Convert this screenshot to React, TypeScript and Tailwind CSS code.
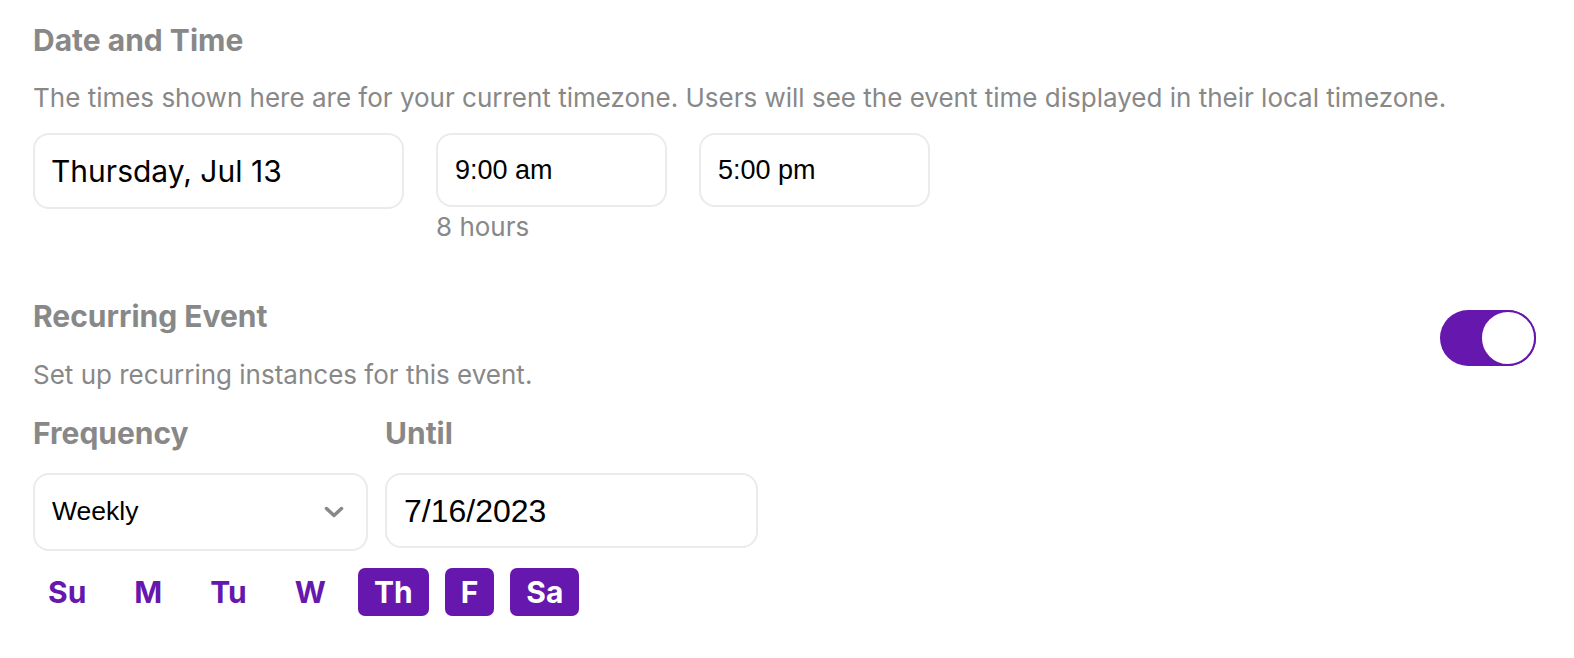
import React from 'react'

const inter = { fontFamily: 'Inter, "Noto Sans", sans-serif' }
const arial = { fontFamily: '"Liberation Sans", Arial, sans-serif' }

const days = [
  { label: 'Su', on: false },
  { label: 'M', on: false },
  { label: 'Tu', on: false },
  { label: 'W', on: false },
  { label: 'Th', on: true },
  { label: 'F', on: true },
  { label: 'Sa', on: true },
]

const App: React.FC = () => {
  return (
    <div className="min-h-screen bg-white pl-[33px] pr-[38px] pt-[24px]" style={inter}>
      {/* Date and time */}
      <h2 className="text-[30px] leading-[32px] font-bold text-[#888888]">Date and Time</h2>
      <p className="mt-[26px] text-[26px] leading-[32px] text-[#888888]">
        The times shown here are for your current timezone. Users will see the event time displayed in their local timezone.
      </p>

      <div className="mt-[19px] flex items-start gap-[32px]">
        <div className="flex h-[76px] w-[371px] items-center rounded-[16px] border-2 border-[#ebebeb] px-[16px] text-[30px] text-black">
          Thursday, Jul 13
        </div>
        <div className="flex flex-col">
          <div
            className="flex h-[74px] w-[231px] items-center rounded-[16px] border-2 border-[#ebebeb] px-[17px] text-[27px] text-black"
            style={arial}
          >
            9:00 am
          </div>
          <span className="mt-[4px] text-[26px] leading-[32px] text-[#888888]">8 hours</span>
        </div>
        <div
          className="flex h-[74px] w-[231px] items-center rounded-[16px] border-2 border-[#ebebeb] px-[17px] text-[27px] text-black"
          style={arial}
        >
          5:00 pm
        </div>
      </div>

      {/* Recurring */}
      <div className="mt-[57px] flex items-start justify-between">
        <div>
          <h2 className="text-[30px] leading-[32px] font-bold text-[#888888]">Recurring Event</h2>
          <p className="mt-[27px] text-[26px] leading-[32px] text-[#888888]">
            Set up recurring instances for this event.
          </p>
        </div>
        <div className="mt-[10px] flex h-[56px] w-[96px] justify-end rounded-full bg-[#6617ad]">
          <div className="h-[56px] w-[56px] rounded-full border-2 border-[#6617ad] bg-white" />
        </div>
      </div>

      <div className="mt-[25px] flex items-start gap-[17px]">
        <div className="flex flex-col">
          <span className="text-[30px] leading-[34px] font-bold text-[#888888]">Frequency</span>
          <div
            className="mt-[23px] flex h-[78px] w-[335px] items-center justify-between rounded-[16px] border-2 border-[#ebebeb] pl-[17px] pr-[22px] text-[26.5px] text-black"
            style={arial}
          >
            Weekly
            <svg width="20" height="12" viewBox="0 0 20 12" fill="none">
              <path d="M2.5 2.5 L10 9.5 L17.5 2.5" stroke="#888888" strokeWidth="3.5" strokeLinecap="round" strokeLinejoin="round" />
            </svg>
          </div>
        </div>
        <div className="flex flex-col">
          <span className="text-[30px] leading-[34px] font-bold text-[#888888]">Until</span>
          <div
            className="mt-[23px] flex h-[75px] w-[373px] items-center rounded-[16px] border-2 border-[#ebebeb] px-[17px] text-[32px] text-black"
            style={arial}
          >
            7/16/2023
          </div>
        </div>
      </div>

      <div className="mt-[17px] -ml-px flex gap-[16px]">
        {days.map((d) => (
          <button
            key={d.label}
            className={
              d.on
                ? 'h-[48px] rounded-[7px] bg-[#6617ad] px-[16px] text-[30px] font-bold leading-[48px] text-white'
                : 'h-[48px] rounded-[7px] px-[16px] text-[30px] font-bold leading-[48px] text-[#6617ad]'
            }
          >
            {d.label}
          </button>
        ))}
      </div>
    </div>
  )
}

export default App
